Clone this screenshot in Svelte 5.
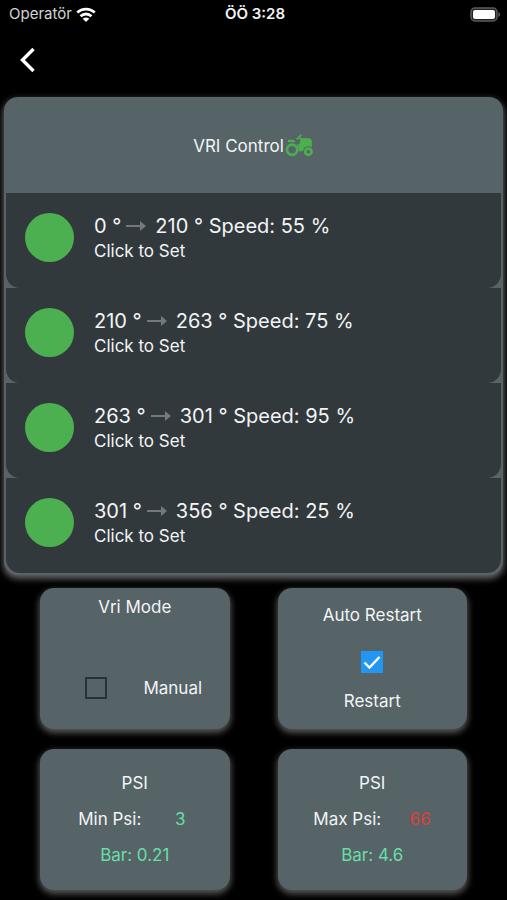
<script>
	let sectors = [
		{ from: 0, to: 210, speed: 55 },
		{ from: 210, to: 263, speed: 75 },
		{ from: 263, to: 301, speed: 95 },
		{ from: 301, to: 356, speed: 25 }
	];
	let pressures = [
		{ label: 'Min Psi:', value: 3, bar: '0.21', high: false },
		{ label: 'Max Psi:', value: 66, bar: '4.6', high: true }
	];
	let manual = false;
	let restart = true;
</script>

<div class="screen">
	<header class="status">
		<div class="carrier">
			<span>Operatör</span>
			<svg width="20" height="15" viewBox="0 0 20 15" fill="none" stroke="#fff" stroke-width="2.8">
				<path d="M1.3 5.6a12.4 12.4 0 0 1 17.4 0" />
				<path d="M4.6 9.2a7.7 7.7 0 0 1 10.8 0" />
				<path d="M10 15 6.7 11.8a4.7 4.7 0 0 1 6.6 0z" fill="#fff" stroke="none" />
			</svg>
		</div>
		<strong class="time">ÖÖ 3:28</strong>
		<svg class="battery" width="31" height="15" viewBox="0 0 31 15">
			<rect x="1" y="1" width="26" height="13" rx="4" fill="#222" stroke="#5c5c5c" stroke-width="1.5" />
			<rect x="3" y="3" width="22" height="9" rx="2" fill="#fff" />
			<path d="M28.4 5v5c2.2-.8 2.2-4.2 0-5z" fill="#5c5c5c" />
		</svg>
	</header>

	<nav>
		<button class="back" aria-label="Back">
			<svg width="16" height="26" viewBox="0 0 16 26" fill="none" stroke="#fff" stroke-width="3.4">
				<path d="M14.5 2 3.5 13l11 11" />
			</svg>
		</button>
	</nav>

	<main>
		<section class="panel">
			<h1>
				VRI Control
				<svg width="30" height="30" viewBox="0 0 24 24" fill="#4caf50">
					<path
						d="M19.5 12c.93 0 1.78.28 2.5.76V8c0-1.1-.9-2-2-2h-6.29l-1.06-1.06 1.41-1.41-.71-.71-3.53 3.53.71.71 1.41-1.41L13 6.71V9c0 1.1-.9 2-2 2h-.54c.95 1.06 1.54 2.46 1.54 4 0 .34-.04.67-.09 1h3.14c.25-2.25 2.14-4 4.45-4z"
						stroke="#4caf50"
						stroke-width=".5"
					/>
					<circle cx="19.5" cy="16.5" r="2.5" fill="none" stroke="#4caf50" stroke-width="2.2" />
					<path d="M4 9h5c0-1.1-.9-2-2-2H4c-.55 0-1 .45-1 1s.45 1 1 1z" />
					<circle cx="6.5" cy="15" r="4.1" fill="none" stroke="#4caf50" stroke-width="2.1" />
				</svg>
			</h1>
			{#each sectors as sector}
				<button class="sector">
					<span class="dot"></span>
					<span class="info">
						<span class="range">
							{sector.from} °
							<svg width="22" height="14" viewBox="0 0 22 14">
								<path d="M1 7h15" stroke="#747a7c" stroke-width="2" />
								<path d="M15 2l6 5-6 5z" fill="#747a7c" />
							</svg>
							<span>{sector.to} ° Speed: {sector.speed} %</span>
						</span>
						<span class="hint">Click to Set</span>
					</span>
				</button>
			{/each}
		</section>

		<div class="cards">
			<section class="card mode">
				<h2>Vri Mode</h2>
				<label>
					<input type="checkbox" bind:checked={manual} />
					Manual
				</label>
			</section>
			<section class="card auto">
				<h2>Auto Restart</h2>
				<label>
					<input type="checkbox" bind:checked={restart} />
					Restart
				</label>
			</section>
			{#each pressures as p}
				<section class="card psi">
					<h2>PSI</h2>
					<p class="reading">
						{p.label}
						<span class="value" class:high={p.high}>{p.value}</span>
					</p>
					<p class="bar">Bar: {p.bar}</p>
				</section>
			{/each}
		</div>
	</main>
</div>

<style>
	:global(body) {
		margin: 0;
		background: #000;
	}
	.screen {
		font-family: Inter, sans-serif;
		font-size: 17px;
		line-height: 24px;
		color: #f2f4f5;
		background: #000;
	}
	h1,
	h2,
	p {
		margin: 0;
		font-size: 17px;
		font-weight: 400;
	}
	button {
		font: inherit;
		color: inherit;
		border: none;
		padding: 0;
		cursor: pointer;
	}
	.status {
		display: grid;
		grid-template-columns: 1fr auto 1fr;
		align-items: center;
		height: 28px;
		padding: 0 6px 0 9px;
		font-size: 15px;
	}
	.carrier {
		display: flex;
		align-items: center;
		gap: 4px;
		color: #d4d4d4;
	}
	.time {
		font-weight: 600;
	}
	.battery {
		justify-self: end;
	}
	nav {
		display: flex;
		align-items: center;
		height: 64px;
		padding-left: 19px;
	}
	.back {
		display: flex;
		background: none;
	}
	main {
		padding: 5px 4px 10px;
	}
	.panel {
		padding: 0 2px 2px;
		background: #566367;
		border-radius: 14px;
		box-shadow: 0 3px 6px 1px #606060;
	}
	h1 {
		display: flex;
		align-items: center;
		justify-content: center;
		box-sizing: border-box;
		height: 96px;
		padding-top: 2px;
	}
	.sector {
		display: flex;
		gap: 20px;
		width: 100%;
		height: 95px;
		padding: 20px 19px;
		text-align: left;
		background: #32393d;
		border-radius: 0 0 14px 14px;
	}
	.dot {
		width: 49px;
		height: 49px;
		border-radius: 50%;
		background: #4caf50;
	}
	.info {
		display: flex;
		flex-direction: column;
	}
	.range {
		display: flex;
		align-items: center;
		gap: 4px;
		font-size: 20px;
		line-height: 26px;
	}
	.range span {
		margin-left: 4px;
	}
	.cards {
		display: grid;
		grid-template-columns: 1fr 1fr;
		gap: 20px 48px;
		padding: 13px 36px 0;
	}
	.card {
		display: flex;
		flex-direction: column;
		align-items: center;
		box-sizing: border-box;
		height: 141px;
		background: #566367;
		border-radius: 14px;
		box-shadow: 0 3px 6px 1px #555;
	}
	label {
		display: flex;
		align-items: center;
	}
	input {
		appearance: none;
		box-sizing: border-box;
		width: 22px;
		height: 22px;
		margin: 0;
		border: 2px solid #263238;
	}
	input:checked {
		border: none;
		background: #2196f3
			url("data:image/svg+xml,%3Csvg xmlns='http://www.w3.org/2000/svg' viewBox='0 0 22 22'%3E%3Cpath d='M3.5 11.5l5 5L18.5 6' fill='none' stroke='white' stroke-width='2.4'/%3E%3C/svg%3E");
	}
	.mode {
		justify-content: space-between;
		padding: 7px 0 29px;
	}
	.mode label {
		gap: 36px;
		padding-left: 18px;
	}
	.auto {
		padding-top: 15px;
		gap: 24px;
	}
	.auto label {
		flex-direction: column;
		gap: 16px;
	}
	.psi {
		padding-top: 16px;
		line-height: 36px;
	}
	.reading {
		display: flex;
		gap: 28px;
	}
	.value {
		min-width: 22px;
		text-align: center;
	}
	.value,
	.bar {
		color: #66dfa8;
	}
	.value.high {
		color: #dc4038;
	}
</style>
